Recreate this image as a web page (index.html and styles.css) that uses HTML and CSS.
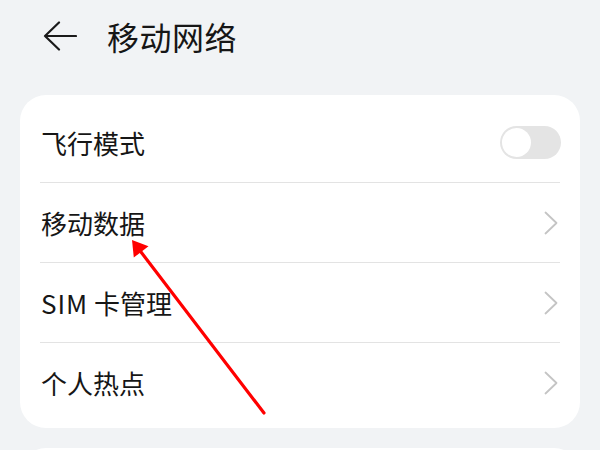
FILE: index.html
```html
<!DOCTYPE html>
<html lang="zh-CN">
<head>
<meta charset="utf-8">
<title>移动网络</title>
<link rel="stylesheet" href="styles.css">
</head>
<body>
<div class="page">
  <header class="header">
    <svg class="back" width="34" height="30" viewBox="0 0 34 30" aria-hidden="true">
      <path d="M16 1.5 L2 15 L16 28.5 M2 15 H33" fill="none" stroke="#1a1a1a" stroke-width="2.2" stroke-linecap="round" stroke-linejoin="round"/>
    </svg>
    <h1 class="title">移动网络</h1>
  </header>

  <section class="card">
    <div class="row">
      <span class="label">飞行模式</span>
      <span class="switch"><span class="knob"></span></span>
    </div>
    <div class="sep"></div>
    <div class="row">
      <span class="label">移动数据</span>
      <svg class="chev" width="16" height="24" viewBox="0 0 16 24" aria-hidden="true"><path d="M1.5 1.5 L12.5 12 L1.5 22.5" fill="none" stroke="#c4c4c4" stroke-width="1.8" stroke-linecap="round" stroke-linejoin="round"/></svg>
    </div>
    <div class="sep"></div>
    <div class="row">
      <span class="label"><span class="latin">SIM</span> 卡管理</span>
      <svg class="chev" width="16" height="24" viewBox="0 0 16 24" aria-hidden="true"><path d="M1.5 1.5 L12.5 12 L1.5 22.5" fill="none" stroke="#c4c4c4" stroke-width="1.8" stroke-linecap="round" stroke-linejoin="round"/></svg>
    </div>
    <div class="sep"></div>
    <div class="row">
      <span class="label">个人热点</span>
      <svg class="chev" width="16" height="24" viewBox="0 0 16 24" aria-hidden="true"><path d="M1.5 1.5 L12.5 12 L1.5 22.5" fill="none" stroke="#c4c4c4" stroke-width="1.8" stroke-linecap="round" stroke-linejoin="round"/></svg>
    </div>
  </section>

  <section class="card card-next"></section>

  <svg class="annot" width="600" height="450" viewBox="0 0 600 450" aria-hidden="true">
    <line x1="264" y1="413" x2="141" y2="252" stroke="#ff0000" stroke-width="3.2" stroke-linecap="round"/>
    <polygon points="132,240 148.5,246.2 133.8,257.6" fill="#ff0000"/>
  </svg>
</div>
</body>
</html>
```

FILE: styles.css
```css
html, body {
  margin: 0;
  padding: 0;
  background: #f1f3f5;
}
body {
  font-family: "Noto Sans CJK SC", "Noto Sans", sans-serif;
  color: #161616;
  overflow: hidden;
}
.page {
  position: relative;
  width: 600px;
  height: 450px;
  overflow: hidden;
}
.header {
  height: 72px;
  display: flex;
  align-items: center;
  padding-left: 43px;
}
.back {
  display: block;
  flex: none;
}
.title {
  margin: 0 0 0 30px;
  font-size: 32px;
  font-weight: 400;
  line-height: 1;
  letter-spacing: 0.5px;
}
.card {
  margin: 23px 20px 0;
  background: #ffffff;
  border-radius: 26px;
  padding: 8px 0 6px;
}
.card-next {
  margin-top: 20px;
  height: 60px;
  padding: 0;
}
.row {
  height: 79px;
  display: flex;
  align-items: center;
  justify-content: space-between;
  padding: 0 19px 0 21px;
}
.label {
  font-size: 26px;
  line-height: 1;
  font-weight: 400;
}
.latin {
  letter-spacing: 1px;
}
.sep {
  height: 1px;
  margin: 0 20px;
  background: #e3e3e3;
}
.chev {
  display: block;
  margin-right: 1px;
}
.switch {
  width: 61px;
  height: 33px;
  border-radius: 17px;
  background: #e4e4e4;
  display: flex;
  align-items: center;
  padding: 0 2px;
  box-sizing: border-box;
}
.knob {
  width: 29px;
  height: 29px;
  border-radius: 50%;
  background: #ffffff;
}
.annot {
  position: absolute;
  left: 0;
  top: 0;
  pointer-events: none;
}
```
